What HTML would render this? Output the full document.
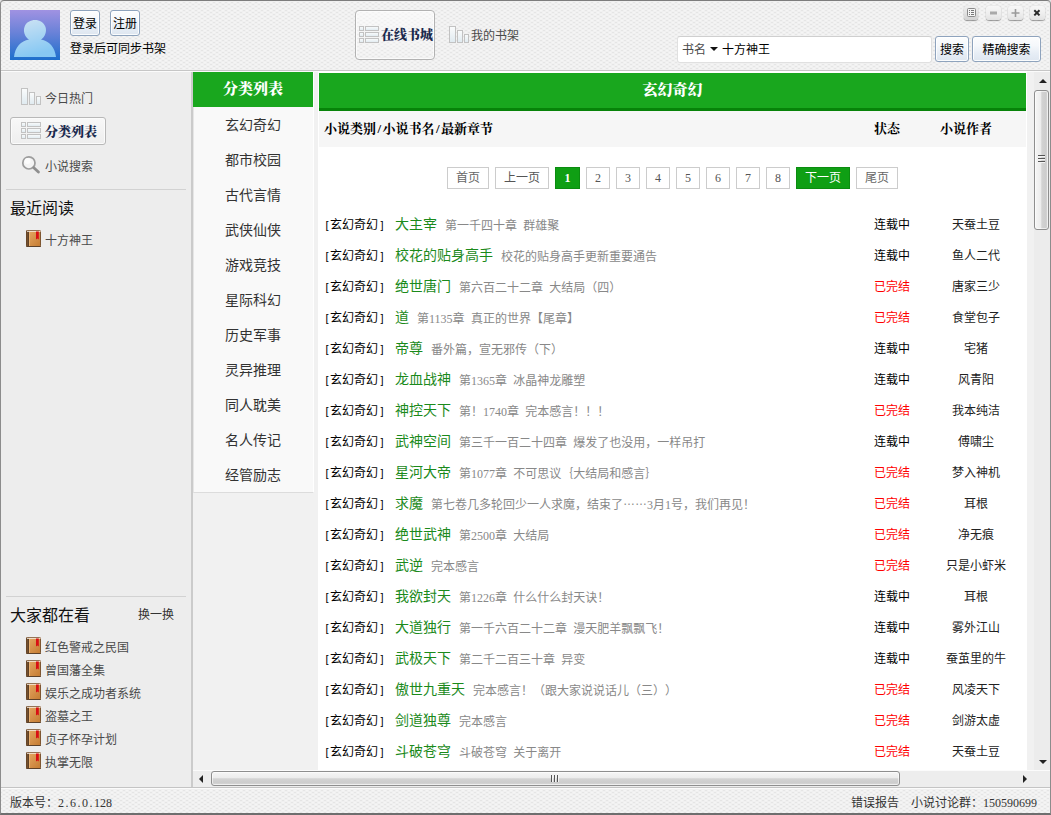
<!DOCTYPE html>
<html lang="zh-CN">
<head>
<meta charset="utf-8">
<title>小说阅读器</title>
<style>
*{box-sizing:border-box;margin:0;padding:0}
html,body{width:1051px;height:815px;overflow:hidden}
body{position:relative;background:#efefef;font-family:"Liberation Sans","Noto Sans CJK SC",sans-serif;font-size:12px;color:#000;text-spacing-trim:space-all}
.th,#mhead,#cathead,.bs,.pg.b{font-family:"Liberation Serif","Noto Serif CJK SC",serif}
.bs,#cathead,#mhead{font-weight:900 !important}
.abs{position:absolute}
#win{position:absolute;left:0;top:0;width:1051px;height:815px;background-color:#f0f0f0;
background-image:radial-gradient(circle at 1px .5px,#e5e5e5 0,#e5e5e5 .7px,rgba(229,229,229,0) 1.1px),radial-gradient(circle at 1px .5px,#e5e5e5 0,#e5e5e5 .7px,rgba(229,229,229,0) 1.1px),radial-gradient(circle at 1px .5px,#f5f5f5 0,#f5f5f5 .8px,rgba(245,245,245,0) 1.3px),radial-gradient(circle at 1px .5px,#f5f5f5 0,#f5f5f5 .8px,rgba(245,245,245,0) 1.3px);
background-size:6px 4px;background-position:0 0,3px 2px,3px 0,0 2px}
#frame{position:absolute;left:0;top:0;width:1051px;height:815px;border:1px solid #8c8c8c;border-top:1px solid #7d7d7d;border-bottom:2px solid #6e6e6e;border-radius:4px 4px 0 0;pointer-events:none}
.btn{position:absolute;border:1px solid #8ea3bd;border-radius:3px;background:linear-gradient(#fcfdfe,#f5f8fb 35%,#e6edf5 70%,#dee6f0);text-align:center;font-size:12px;color:#000;box-shadow:inset 0 0 0 1px rgba(255,255,255,.85);white-space:nowrap}
.t12{font-size:12px;line-height:14px;white-space:nowrap}
.n{font-family:"Liberation Serif",serif;font-size:12px}
.n u{display:inline-block;width:6px;text-align:center;text-decoration:none}
.el{position:relative;top:-4px}
.wb{top:6px;width:15px;height:14px;border-radius:3px;background:linear-gradient(#f7f7f7,#ededed 60%,#e2e2e2);box-shadow:0 1px 1px rgba(0,0,0,.35),0 0 1px rgba(0,0,0,.25)}
.wb svg{position:absolute;left:0;top:0}
/* sidebar */
#side{left:1px;top:72px;width:190px;height:715px;background:#ededed}
#sideline{left:191px;top:72px;width:2px;height:715px;background:#cbcbcb}
#mid{left:193px;top:72px;width:841px;height:698px;background:#f1f1f1}
.sitem{position:absolute;left:45px;font-size:12px;color:#4a4a4a;white-space:nowrap;line-height:14px}
.hr{position:absolute;left:6px;width:180px;height:1px;background:#d2d2d2}
.h16{position:absolute;left:10px;font-size:16px;line-height:18px;color:#111;white-space:nowrap}
.book{position:absolute;left:26px;width:15px;height:17px}
/* category */
#cat{left:193px;top:72px;width:121px;height:421px;background:#f9f9f9;border-left:1px solid #e6e6e6;border-right:1px solid #fff;border-bottom:1px solid #dcdcdc}
#cathead{left:193px;top:72px;width:120px;height:35px;background:#19a71e;color:#fff;font-weight:bold;font-size:15px;line-height:35px;text-align:center}
.ci{position:absolute;left:193px;width:120px;text-align:center;font-size:14px;line-height:16px;color:#333}
/* main */
#main{left:318px;top:71px;width:709px;height:699px;background:#fff}
#mhead{left:319px;top:73px;width:707px;height:38px;background:#19a71e;border-bottom:3px solid #078309;color:#fff;font-weight:bold;font-size:15px;line-height:35px;text-align:center}
#thead{left:319px;top:111px;width:707px;height:36px;background:#f6f6f6}
.th{position:absolute;top:121px;font-size:13px;font-weight:bold;line-height:16px;white-space:nowrap;color:#000}
.th u{display:inline-block;width:6.5px;text-align:center;text-decoration:none}
.pg{position:absolute;top:167px;height:22px;border:1px solid #ccc;background:#fff;font-size:12px;line-height:20px;text-align:center;color:#555}
.pg.on{background:#0f9f14;color:#fff}
.pg.num{font-family:"Liberation Serif",serif;font-size:12px;line-height:20px}
.pg.dis{color:#666}
.pg.b{font-weight:bold;font-size:12px}
.pg.on{border-color:#0b8c10}
.row{position:absolute;left:319px;width:707px;height:20px}
.row .c{position:absolute;left:5px;top:4px;font-size:12px;line-height:14px;white-space:nowrap;color:#000}
.row .c b{display:inline-block;width:6px;font-weight:normal;text-align:center;font-size:11px}
.row .c b.r{text-align:center;padding-left:2px}
.row .t{position:absolute;left:76px;top:1px;font-size:14px;line-height:18px;white-space:nowrap;color:#1b8a1b}
.row .t i{font-style:normal;font-size:12px;color:#888;margin-left:8px;word-spacing:3px;position:relative;top:1px}
.row .s{position:absolute;left:543px;width:60px;top:4px;text-align:center;font-size:12px;line-height:14px}
.row .s.r{color:#f00}
.row .a{position:absolute;left:607px;width:100px;top:4px;text-align:center;font-size:12px;line-height:14px;color:#222;white-space:nowrap}
/* scrollbars */
.vth{border:1px solid #8e8e8e;border-radius:3px;background:linear-gradient(90deg,#f6f6f6,#ececec 45%,#d3d3d3 52%,#cdcdcd 80%,#d8d8d8);box-shadow:inset 0 0 0 1px rgba(255,255,255,.6)}
.hth{border:1px solid #8e8e8e;border-radius:3px;background:linear-gradient(#f6f6f6,#ececec 45%,#d3d3d3 52%,#cdcdcd 80%,#d8d8d8);box-shadow:inset 0 0 0 1px rgba(255,255,255,.6)}
</style>
</head>
<body>
<div id="win"></div>
<!-- HEADER -->
<svg class="abs" style="left:10px;top:10px" width="50" height="50" viewBox="0 0 50 50">
<defs><linearGradient id="ag" x1="0" y1="0" x2="0" y2="1"><stop offset="0" stop-color="#a092e2"/><stop offset="0.45" stop-color="#6a82d8"/><stop offset="1" stop-color="#1d6fcc"/></linearGradient>
<linearGradient id="pg" x1="0" y1="0" x2="0.3" y2="1"><stop offset="0" stop-color="#cfe3f3"/><stop offset="1" stop-color="#86c8f3"/></linearGradient></defs>
<rect width="50" height="50" fill="url(#ag)"/>
<path d="M4 47 C5 37 11 31 19 29.5 C14.5 27 13 21 14.5 17 C16 12 21 10 25 10 C29.5 10 34 12.5 35.5 17 C37 21.5 35 27 31 29.5 C39 31 45 37 46 47 Z" fill="url(#pg)"/>
</svg>
<div class="btn" style="left:70px;top:10px;width:30px;height:26px;line-height:27px">登录</div>
<div class="btn" style="left:110px;top:10px;width:30px;height:26px;line-height:27px">注册</div>
<div class="abs t12" style="left:70px;top:42px">登录后可同步书架</div>
<div class="abs" style="left:355px;top:10px;width:80px;height:50px;border:1px solid #b2b2b2;border-radius:4px;background:linear-gradient(rgba(255,255,255,.55),rgba(255,255,255,.05));box-shadow:inset 0 0 0 1px rgba(255,255,255,.7)"></div>
<svg class="abs" style="left:359px;top:26px" width="20" height="17"><use href="#list"/></svg>
<div class="abs bs" style="left:381px;top:27px;font-size:13px;font-weight:bold;line-height:16px;color:#1b2a4e;white-space:nowrap">在线书城</div>
<svg class="abs" style="left:449px;top:26px" width="20" height="17"><use href="#bars"/></svg>
<div class="abs t12" style="left:471px;top:29px;color:#4a4a4a">我的书架</div>
<div class="wb abs" style="left:964px;width:14px;background:linear-gradient(#f0f0f0,#dedede 60%,#d2d2d2)"><svg width="15" height="14" viewBox="0 0 15 14"><rect x="3.5" y="2.5" width="8" height="8" rx="1" fill="#f4f4f4" stroke="#8a8a8a"/><path d="M5 5h1M7 5h3M5 7h1M7 7h3M5 9h1M7 9h3" stroke="#777" stroke-width="1" transform="translate(0,-0.5)"/></svg></div>
<div class="wb abs" style="left:986px"><svg width="15" height="14" viewBox="0 0 15 14"><path d="M4 7h7" stroke="#a9a9a9" stroke-width="3"/></svg></div>
<div class="wb abs" style="left:1008px"><svg width="15" height="14" viewBox="0 0 15 14"><path d="M3.5 7h8M7.5 3v8" stroke="#9a9a9a" stroke-width="1.6"/></svg></div>
<div class="wb abs" style="left:1030px"><svg width="15" height="14" viewBox="0 0 15 14"><path d="M4.3 4.2l5.2 5.2M9.5 4.2l-5.2 5.2" stroke="#2a2a2a" stroke-width="2"/></svg></div>
<div class="abs" style="left:677px;top:36px;width:255px;height:27px;background:#fff;border:1px solid #e0e0e0;border-top-color:#cfcfcf;border-radius:3px"></div>
<div class="abs t12" style="left:682px;top:43px;color:#4a4a4a">书名</div>
<div class="abs" style="left:710px;top:47px;width:0;height:0;border-left:4px solid transparent;border-right:4px solid transparent;border-top:4px solid #111"></div>
<div class="abs t12" style="left:722px;top:43px;color:#000">十方神王</div>
<div class="btn" style="left:935px;top:36px;width:34px;height:26px;line-height:27px">搜索</div>
<div class="btn" style="left:972px;top:36px;width:69px;height:26px;line-height:27px">精确搜索</div>
<div class="abs" style="left:1px;top:70px;width:1049px;height:1px;background:#c6c6c6"></div>
<div class="abs" style="left:1px;top:71px;width:1049px;height:1px;background:#fbfbfb"></div>
<!-- SIDEBAR -->
<div id="side" class="abs"></div><div id="sideline" class="abs"></div><div id="mid" class="abs"></div>
<svg width="0" height="0" style="position:absolute"><defs>
<linearGradient id="bk" x1="0" y1="0" x2="1" y2="1"><stop offset="0" stop-color="#e9ab67"/><stop offset="1" stop-color="#c47b31"/></linearGradient>
<linearGradient id="ic" x1="0" y1="0" x2="0" y2="1"><stop offset="0" stop-color="#fbfcfc"/><stop offset="1" stop-color="#dfeaf0"/></linearGradient>
<symbol id="book" viewBox="0 0 15 17"><rect x="0.5" y="0.5" width="14" height="16" rx="0.8" fill="url(#bk)" stroke="#7e5631" stroke-width="1"/><rect x="0.4" y="0.6" width="2.6" height="16" fill="#5a3d23"/><rect x="1.2" y="1" width="1" height="15.5" fill="#7b5534"/><rect x="3" y="1.6" width="0.8" height="14.6" fill="#eeb878"/><rect x="1" y="0.8" width="13.5" height="1" fill="#f4ece0"/><path d="M10 1.5h2.8v8l-1.4-1l-1.4 1z" fill="#d90f14"/><rect x="0.5" y="16" width="14.3" height="1" fill="#5d4129"/></symbol>
<symbol id="bars" viewBox="0 0 20 17"><g fill="url(#ic)" stroke="#c2c2c2" stroke-width="1"><rect x="0.5" y="0.5" width="6" height="16"/><rect x="8.5" y="4.5" width="5" height="12"/><rect x="15.5" y="8.5" width="4" height="8"/></g></symbol>
<symbol id="list" viewBox="0 0 20 17"><g fill="url(#ic)" stroke="#c2c2c2" stroke-width="1"><rect x="0.5" y="0.5" width="4" height="4"/><rect x="6.5" y="0.5" width="13" height="4"/><rect x="0.5" y="6.5" width="4" height="4"/><rect x="6.5" y="6.5" width="13" height="4"/><rect x="0.5" y="12.5" width="4" height="4"/><rect x="6.5" y="12.5" width="13" height="4"/></g></symbol>
</defs></svg>
<svg class="abs" style="left:21px;top:88px" width="20" height="17"><use href="#bars"/></svg>
<div class="sitem" style="top:92px">今日热门</div>
<div class="abs" style="left:10px;top:117px;width:96px;height:28px;border:1px solid #b8b8b8;border-radius:3px;background:linear-gradient(#f8f8f8,#eeeeee);box-shadow:inset 0 0 0 1px #fbfbfb"></div>
<svg class="abs" style="left:21px;top:122px" width="20" height="17"><use href="#list"/></svg>
<div class="abs bs" style="left:45px;top:124px;font-size:13px;font-weight:bold;line-height:16px;color:#1b2a4e;white-space:nowrap">分类列表</div>
<svg class="abs" style="left:21px;top:155px" width="19" height="19" viewBox="0 0 19 19"><circle cx="7.9" cy="7.9" r="6.1" fill="#f4f4f4" stroke="#9d9d9d" stroke-width="1.7"/><circle cx="6.5" cy="6" r="3" fill="#fcfcfc"/><path d="M12.8 12.8l4.6 4.3" stroke="#8f8f8f" stroke-width="2.8" stroke-linecap="round"/></svg>
<div class="sitem" style="top:160px">小说搜索</div>
<div class="hr" style="top:189px"></div>
<div class="h16" style="top:200px">最近阅读</div>
<svg class="book" style="top:230px"><use href="#book"/></svg>
<div class="sitem" style="top:234px">十方神王</div>
<div class="hr" style="top:596px"></div>
<div class="h16" style="top:607px">大家都在看</div>
<div class="abs t12" style="left:138px;top:608px;color:#333">换一换</div>
<svg class="book" style="top:637px"><use href="#book"/></svg><div class="sitem" style="top:641px">红色警戒之民国</div>
<svg class="book" style="top:660px"><use href="#book"/></svg><div class="sitem" style="top:664px">曾国藩全集</div>
<svg class="book" style="top:683px"><use href="#book"/></svg><div class="sitem" style="top:687px">娱乐之成功者系统</div>
<svg class="book" style="top:706px"><use href="#book"/></svg><div class="sitem" style="top:710px">盗墓之王</div>
<svg class="book" style="top:729px"><use href="#book"/></svg><div class="sitem" style="top:733px">贞子怀孕计划</div>
<svg class="book" style="top:752px"><use href="#book"/></svg><div class="sitem" style="top:756px">执掌无限</div>
<!-- CATEGORY -->
<div id="cat" class="abs"></div>
<div id="cathead" class="abs">分类列表</div>
<div class="ci" style="top:117px">玄幻奇幻</div>
<div class="ci" style="top:152px">都市校园</div>
<div class="ci" style="top:187px">古代言情</div>
<div class="ci" style="top:222px">武侠仙侠</div>
<div class="ci" style="top:257px">游戏竞技</div>
<div class="ci" style="top:292px">星际科幻</div>
<div class="ci" style="top:327px">历史军事</div>
<div class="ci" style="top:362px">灵异推理</div>
<div class="ci" style="top:397px">同人耽美</div>
<div class="ci" style="top:432px">名人传记</div>
<div class="ci" style="top:467px">经管励志</div>
<!-- MAIN -->
<div id="main" class="abs"></div>
<div id="mhead" class="abs">玄幻奇幻</div>
<div id="thead" class="abs"></div>
<div class="th" style="left:324px">小说类别<u>/</u>小说书名<u>/</u>最新章节</div>
<div class="th" style="left:857px;width:60px;text-align:center">状态</div>
<div class="th" style="left:926px;width:80px;text-align:center">小说作者</div>
<div class="pg dis" style="left:447px;width:42px">首页</div>
<div class="pg " style="left:495px;width:54px">上一页</div>
<div class="pg on num b" style="left:555px;width:25px">1</div>
<div class="pg num" style="left:586px;width:24px">2</div>
<div class="pg num" style="left:616px;width:24px">3</div>
<div class="pg num" style="left:646px;width:24px">4</div>
<div class="pg num" style="left:676px;width:24px">5</div>
<div class="pg num" style="left:706px;width:24px">6</div>
<div class="pg num" style="left:736px;width:24px">7</div>
<div class="pg num" style="left:766px;width:24px">8</div>
<div class="pg on" style="left:796px;width:54px">下一页</div>
<div class="pg dis" style="left:856px;width:42px">尾页</div>
<div class="row" style="top:214px"><span class="c"><b>[</b>玄幻奇幻<b class="r">]</b></span><span class="t">大主宰<i>第一千四十章 群雄聚</i></span><span class="s">连载中</span><span class="a">天蚕土豆</span></div>
<div class="row" style="top:245px"><span class="c"><b>[</b>玄幻奇幻<b class="r">]</b></span><span class="t">校花的贴身高手<i>校花的贴身高手更新重要通告</i></span><span class="s">连载中</span><span class="a">鱼人二代</span></div>
<div class="row" style="top:276px"><span class="c"><b>[</b>玄幻奇幻<b class="r">]</b></span><span class="t">绝世唐门<i>第六百二十二章 大结局（四）</i></span><span class="s r">已完结</span><span class="a">唐家三少</span></div>
<div class="row" style="top:307px"><span class="c"><b>[</b>玄幻奇幻<b class="r">]</b></span><span class="t">道<i>第<span class="n">1135</span>章 真正的世界【尾章】</i></span><span class="s r">已完结</span><span class="a">食堂包子</span></div>
<div class="row" style="top:338px"><span class="c"><b>[</b>玄幻奇幻<b class="r">]</b></span><span class="t">帝尊<i>番外篇，宣无邪传（下）</i></span><span class="s">连载中</span><span class="a">宅猪</span></div>
<div class="row" style="top:369px"><span class="c"><b>[</b>玄幻奇幻<b class="r">]</b></span><span class="t">龙血战神<i>第<span class="n">1365</span>章 冰晶神龙雕塑</i></span><span class="s">连载中</span><span class="a">风青阳</span></div>
<div class="row" style="top:400px"><span class="c"><b>[</b>玄幻奇幻<b class="r">]</b></span><span class="t">神控天下<i>第！<span class="n">1740</span>章 完本感言！！！</i></span><span class="s r">已完结</span><span class="a">我本纯洁</span></div>
<div class="row" style="top:431px"><span class="c"><b>[</b>玄幻奇幻<b class="r">]</b></span><span class="t">武神空间<i>第三千一百二十四章 爆发了也没用，一样吊打</i></span><span class="s">连载中</span><span class="a">傅啸尘</span></div>
<div class="row" style="top:462px"><span class="c"><b>[</b>玄幻奇幻<b class="r">]</b></span><span class="t">星河大帝<i>第<span class="n">1077</span>章 不可思议｛大结局和感言｝</i></span><span class="s r">已完结</span><span class="a">梦入神机</span></div>
<div class="row" style="top:493px"><span class="c"><b>[</b>玄幻奇幻<b class="r">]</b></span><span class="t">求魔<i>第七卷几多轮回少一人求魔，结束了<span class="el">……</span><span class="n">3</span>月<span class="n">1</span>号，我们再见！</i></span><span class="s r">已完结</span><span class="a">耳根</span></div>
<div class="row" style="top:524px"><span class="c"><b>[</b>玄幻奇幻<b class="r">]</b></span><span class="t">绝世武神<i>第<span class="n">2500</span>章 大结局</i></span><span class="s r">已完结</span><span class="a">净无痕</span></div>
<div class="row" style="top:555px"><span class="c"><b>[</b>玄幻奇幻<b class="r">]</b></span><span class="t">武逆<i>完本感言</i></span><span class="s r">已完结</span><span class="a">只是小虾米</span></div>
<div class="row" style="top:586px"><span class="c"><b>[</b>玄幻奇幻<b class="r">]</b></span><span class="t">我欲封天<i>第<span class="n">1226</span>章 什么什么封天诀！</i></span><span class="s">连载中</span><span class="a">耳根</span></div>
<div class="row" style="top:617px"><span class="c"><b>[</b>玄幻奇幻<b class="r">]</b></span><span class="t">大道独行<i>第一千六百二十二章 漫天肥羊飘飘飞！</i></span><span class="s">连载中</span><span class="a">雾外江山</span></div>
<div class="row" style="top:648px"><span class="c"><b>[</b>玄幻奇幻<b class="r">]</b></span><span class="t">武极天下<i>第二千二百三十章 异变</i></span><span class="s">连载中</span><span class="a">蚕茧里的牛</span></div>
<div class="row" style="top:679px"><span class="c"><b>[</b>玄幻奇幻<b class="r">]</b></span><span class="t">傲世九重天<i>完本感言！（跟大家说说话儿（三））</i></span><span class="s r">已完结</span><span class="a">风凌天下</span></div>
<div class="row" style="top:710px"><span class="c"><b>[</b>玄幻奇幻<b class="r">]</b></span><span class="t">剑道独尊<i>完本感言</i></span><span class="s r">已完结</span><span class="a">剑游太虚</span></div>
<div class="row" style="top:741px"><span class="c"><b>[</b>玄幻奇幻<b class="r">]</b></span><span class="t">斗破苍穹<i>斗破苍穹 关于离开</i></span><span class="s r">已完结</span><span class="a">天蚕土豆</span></div>
<!-- SCROLLBARS -->
<div class="abs" style="left:1034px;top:72px;width:16px;height:715px;background:#ececec"></div>
<div class="abs" style="left:193px;top:770px;width:857px;height:1px;background:#fbfbfb"></div>
<div class="abs" style="left:193px;top:771px;width:857px;height:16px;background:#ededed"></div>
<div class="abs" style="left:1039px;top:79px;width:0;height:0;border-left:4px solid transparent;border-right:4px solid transparent;border-bottom:4px solid #222"></div>
<div class="abs" style="left:1039px;top:760px;width:0;height:0;border-left:4px solid transparent;border-right:4px solid transparent;border-top:4px solid #222"></div>
<div class="abs vth" style="left:1034px;top:90px;width:15px;height:140px"></div>
<div class="abs" style="left:1038px;top:155px;width:7px;height:1px;background:#555;box-shadow:0 1px 0 #f4f4f4,0 3px 0 #555,0 4px 0 #f4f4f4,0 6px 0 #555,0 7px 0 #f4f4f4"></div>
<div class="abs" style="left:199px;top:775px;width:0;height:0;border-top:4px solid transparent;border-bottom:4px solid transparent;border-right:4px solid #222"></div>
<div class="abs" style="left:1023px;top:775px;width:0;height:0;border-top:4px solid transparent;border-bottom:4px solid transparent;border-left:4px solid #222"></div>
<div class="abs hth" style="left:211px;top:771px;width:689px;height:15px"></div>
<div class="abs" style="left:551px;top:775px;width:1px;height:7px;background:#555;box-shadow:1px 0 0 #f4f4f4,3px 0 0 #555,4px 0 0 #f4f4f4,6px 0 0 #555,7px 0 0 #f4f4f4"></div>
<!-- STATUS -->
<div class="abs" style="left:1px;top:787px;width:1049px;height:1px;background:#c4c4c4"></div>
<div class="abs" style="left:1px;top:788px;width:1049px;height:1px;background:#fbfbfb"></div>
<div class="abs t12" style="left:10px;top:796px;color:#333">版本号：<span class="n" style="letter-spacing:0">2<u>.</u>6<u>.</u>0<u>.</u>128</span></div>
<div class="abs t12" style="left:851px;top:796px;color:#333">错误报告</div>
<div class="abs t12" style="left:911px;top:796px;color:#333">小说讨论群：<span class="n">150590699</span></div>
<div id="frame"></div>
</body>
</html>
